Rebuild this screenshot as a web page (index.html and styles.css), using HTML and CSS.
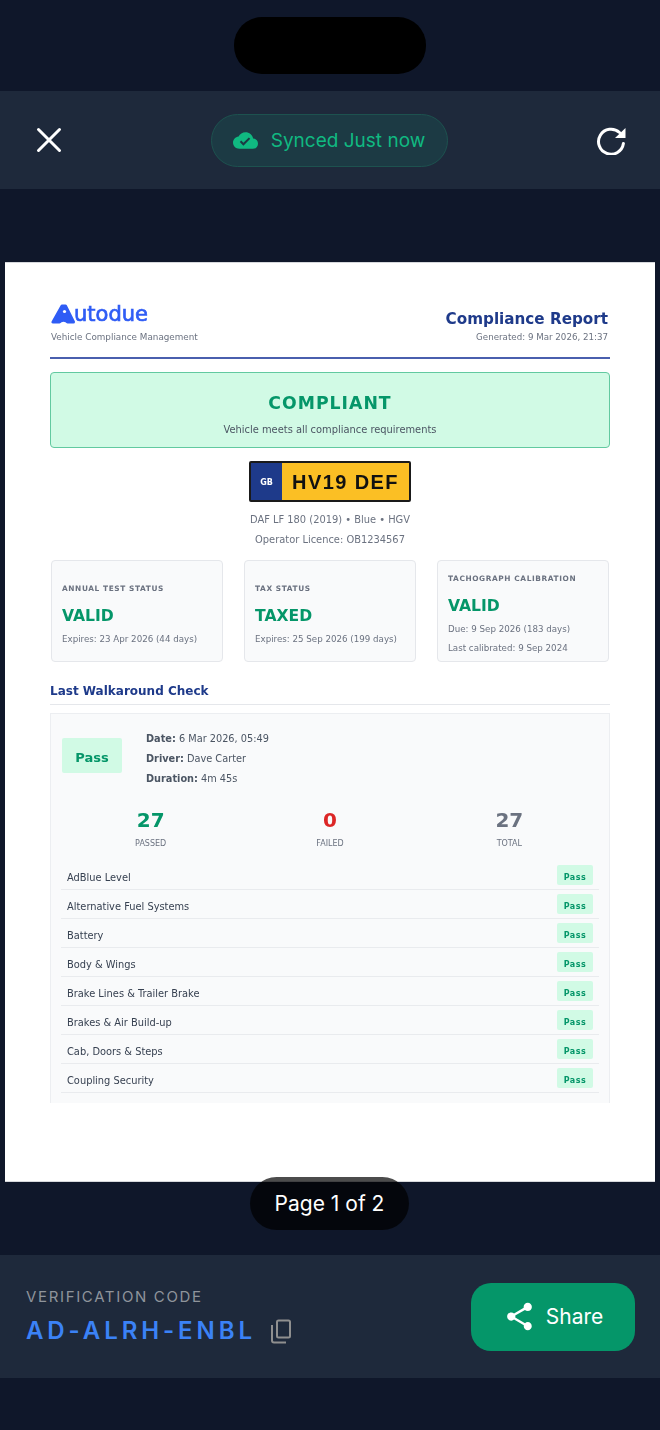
FILE: index.html
```html
<!DOCTYPE html>
<html lang="en">
<head>
    <meta charset="UTF-8">
    <meta name="viewport" content="width=device-width, initial-scale=1.0">
    <title>Compliance Report</title>
    <link rel="stylesheet" href="styles.css">
</head>
<body>
    <div class="status-area">
        <div class="notch"></div>
    </div>

    <header class="top-bar">
        <button class="icon-btn" aria-label="Close">
            <svg width="26" height="26" viewBox="0 0 26 26" fill="none" stroke="#fff" stroke-width="3" stroke-linecap="round"><path d="M2.5 2.5L23.5 23.5M23.5 2.5L2.5 23.5"/></svg>
        </button>
        <div class="sync-pill">
            <svg width="25" height="25" viewBox="0 0 24 24" fill="#10b981"><path fill-rule="evenodd" d="M19.35 10.04C18.67 6.59 15.64 4 12 4 9.11 4 6.6 5.64 5.35 8.04 2.34 8.36 0 10.91 0 14c0 3.31 2.69 6 6 6h13c2.76 0 5-2.24 5-5 0-2.64-2.05-4.78-4.65-4.96zM10 17l-3.5-3.5 1.41-1.41L10 14.17 15.18 9l1.41 1.41L10 17z"/></svg>
            <span>Synced Just now</span>
        </div>
        <button class="icon-btn" aria-label="Refresh">
            <svg width="30" height="30" viewBox="0 0 30 30" fill="none"><path d="M23.5 7.5A12.5 12.5 0 1 0 27.4 18.5" stroke="#fff" stroke-width="3" stroke-linecap="round"/><path d="M29.5 3V13H19Z" fill="#fff"/></svg>
        </button>
    </header>

    <main class="viewer">
        <div class="doc">
            <div class="doc-head">
                <div>
                    <div class="logo">
                        <svg width="25" height="21" viewBox="0 0 25 21">
                            <path fill="#2f5cf5" stroke="#2f5cf5" stroke-width="3" stroke-linejoin="round" d="M11 2L2 18H22.5L14.5 2Z"/>
                            <path fill="#fff" d="M8.5 20Q12.5 15.5 16.5 20Z"/>
                            <circle cx="13.5" cy="7.5" r="1.6" fill="#fff"/>
                        </svg>
                        <span>utodue</span>
                    </div>
                    <div class="tagline">Vehicle Compliance Management</div>
                </div>
                <div class="report-info">
                    <div class="report-title">Compliance Report</div>
                    <div class="generated">Generated: 9 Mar 2026, 21:37</div>
                </div>
            </div>

            <div class="banner">
                <div class="banner-title">COMPLIANT</div>
                <div class="banner-sub">Vehicle meets all compliance requirements</div>
            </div>

            <div class="plate">
                <div class="plate-gb">GB</div>
                <div class="plate-reg">HV19 DEF</div>
            </div>
            <div class="vehicle-info">
                <p>DAF LF 180 (2019) • Blue • HGV</p>
                <p>Operator Licence: OB1234567</p>
            </div>

            <div class="cards">
                <div class="card">
                    <div class="card-label">ANNUAL TEST STATUS</div>
                    <div class="card-value">VALID</div>
                    <div class="card-detail">Expires: 23 Apr 2026 (44 days)</div>
                </div>
                <div class="card">
                    <div class="card-label">TAX STATUS</div>
                    <div class="card-value">TAXED</div>
                    <div class="card-detail">Expires: 25 Sep 2026 (199 days)</div>
                </div>
                <div class="card">
                    <div class="card-label">TACHOGRAPH CALIBRATION</div>
                    <div class="card-value">VALID</div>
                    <div class="card-detail">Due: 9 Sep 2026 (183 days)</div>
                    <div class="card-detail">Last calibrated: 9 Sep 2024</div>
                </div>
            </div>

            <h2 class="section-title">Last Walkaround Check</h2>

            <div class="check-panel">
                <div class="check-head">
                    <div class="pass-big">Pass</div>
                    <div class="check-meta">
                        <p><strong>Date:</strong> 6 Mar 2026, 05:49</p>
                        <p><strong>Driver:</strong> Dave Carter</p>
                        <p><strong>Duration:</strong> 4m 45s</p>
                    </div>
                </div>
                <div class="stats">
                    <div class="stat"><div class="stat-num green">27</div><div class="stat-label">PASSED</div></div>
                    <div class="stat"><div class="stat-num red">0</div><div class="stat-label">FAILED</div></div>
                    <div class="stat"><div class="stat-num grey">27</div><div class="stat-label">TOTAL</div></div>
                </div>
                <div class="check-row"><span>AdBlue Level</span><span class="pass-small">Pass</span></div>
                <div class="check-row"><span>Alternative Fuel Systems</span><span class="pass-small">Pass</span></div>
                <div class="check-row"><span>Battery</span><span class="pass-small">Pass</span></div>
                <div class="check-row"><span>Body &amp; Wings</span><span class="pass-small">Pass</span></div>
                <div class="check-row"><span>Brake Lines &amp; Trailer Brake</span><span class="pass-small">Pass</span></div>
                <div class="check-row"><span>Brakes &amp; Air Build-up</span><span class="pass-small">Pass</span></div>
                <div class="check-row"><span>Cab, Doors &amp; Steps</span><span class="pass-small">Pass</span></div>
                <div class="check-row"><span>Coupling Security</span><span class="pass-small">Pass</span></div>
            </div>
        </div>
        <div class="page-pill">Page 1 of 2</div>
    </main>

    <footer class="bottom-bar">
        <div>
            <div class="code-label">VERIFICATION CODE</div>
            <div class="code-row">
                <span class="code">AD-ALRH-ENBL</span>
                <svg width="21" height="25" viewBox="0 0 21 25" fill="none" stroke="#8f8f8f" stroke-width="2"><rect x="7" y="1.5" width="13" height="17" rx="1.5"/><path d="M2 6V21.5A2 2 0 0 0 4 23.5H16"/></svg>
            </div>
        </div>
        <button class="share-btn">
            <svg width="33" height="33" viewBox="0 0 24 24" fill="#fff"><path d="M18 16.08c-.76 0-1.44.3-1.96.77L8.91 12.7c.05-.23.09-.46.09-.7s-.04-.47-.09-.7l7.05-4.11c.54.5 1.25.81 2.04.81 1.66 0 3-1.34 3-3s-1.34-3-3-3-3 1.34-3 3c0 .24.04.47.09.7L8.04 9.81C7.5 9.31 6.79 9 6 9c-1.66 0-3 1.34-3 3s1.34 3 3 3c.79 0 1.5-.31 2.04-.81l7.12 4.16c-.05.21-.08.43-.08.65 0 1.61 1.31 2.92 2.92 2.92 1.61 0 2.92-1.31 2.92-2.92s-1.31-2.92-2.92-2.92z"/></svg>
            <span>Share</span>
        </button>
    </footer>
</body>
</html>
```
FILE: styles.css
```css
/* App shell */
* {
    box-sizing: border-box;
}
body {
    font-family: Inter, sans-serif;
    background-color: #0f172a;
    color: #fff;
    margin: 0;
    height: 1430px;
    overflow: hidden;
}
p {
    margin: 0;
}
button {
    font-family: inherit;
    border: none;
    background: none;
    padding: 0;
}
.status-area {
    height: 91px;
    padding-top: 17px;
    display: flex;
    justify-content: center;
}
.notch {
    width: 192px;
    height: 57px;
    background-color: #000;
    border-radius: 28px;
}
.top-bar {
    height: 98px;
    background-color: #1e293b;
    display: flex;
    align-items: center;
    justify-content: space-between;
    padding: 0 34px 0 36px;
}
.icon-btn {
    display: flex;
}
.sync-pill {
    width: 237px;
    height: 53px;
    display: flex;
    align-items: center;
    justify-content: center;
    gap: 13px;
    background-color: #1c3a44;
    border: 1.5px solid #1d524f;
    border-radius: 27px;
    color: #10b981;
    font-size: 19px;
}

/* Document preview */
.viewer {
    position: relative;
    height: 1066px;
    padding: 73px 5px 0;
}
.doc {
    height: 920px;
    background-color: #fff;
    color: #374151;
    font-family: "DejaVu Sans", sans-serif;
    padding: 38px 45px 0;
    overflow: hidden;
    border: 1px solid #d6d8dc;
    border-width: 1px 0;
    filter: blur(0.35px);
}
.doc-head {
    display: flex;
    justify-content: space-between;
    align-items: flex-start;
    height: 58px;
    border-bottom: 2px solid #4a5fae;
}
.logo {
    display: flex;
    align-items: flex-end;
    height: 26px;
    margin-left: 1px;
    font-size: 21px;
    font-weight: 500;
    color: #2f5cf5;
    -webkit-text-stroke: 0.7px #2f5cf5;
}
.logo svg {
    margin-bottom: 2px;
}
.logo span {
    margin-left: -2px;
    line-height: 26px;
}
.tagline {
    margin: 5px 0 0 1px;
    font-size: 8.8px;
    color: #6b7280;
}
.report-info {
    text-align: right;
    padding: 9px 2px 0 0;
}
.report-title {
    font-size: 15.2px;
    font-weight: bold;
    color: #1e3a8a;
}
.generated {
    margin-top: 4px;
    font-size: 8.7px;
    color: #6b7280;
}
.banner {
    margin-top: 13px;
    height: 76px;
    background-color: #d1fae5;
    border: 1.5px solid #62c9a0;
    border-radius: 4px;
    text-align: center;
    padding-top: 18px;
}
.banner-title {
    font-size: 17.3px;
    line-height: 24px;
    font-weight: bold;
    letter-spacing: 1px;
    color: #059669;
}
.banner-sub {
    margin-top: 8px;
    font-size: 9.9px;
    line-height: 14px;
    color: #4b5563;
}
.plate {
    display: flex;
    width: 162px;
    height: 41px;
    margin: 13px auto 0;
    border: 2px solid #1a1a1a;
    border-radius: 2px;
}
.plate-gb {
    width: 31px;
    background-color: #1e3a8a;
    color: #fff;
    font-size: 8px;
    font-weight: bold;
    display: flex;
    align-items: center;
    justify-content: center;
    padding-top: 2px;
}
.plate-reg {
    flex: 1;
    background-color: #fbbf24;
    color: #111;
    font-family: "Liberation Sans", sans-serif;
    font-size: 20px;
    font-weight: bold;
    letter-spacing: 1.4px;
    display: flex;
    align-items: center;
    justify-content: center;
    padding-top: 2px;
}
.vehicle-info {
    margin-top: 8px;
    text-align: center;
    font-size: 9.9px;
    line-height: 20px;
    color: #6b7280;
}
.cards {
    display: grid;
    grid-template-columns: repeat(3, 172px);
    justify-content: space-between;
    margin: 10px 1px 0;
    height: 102px;
}
.card {
    background-color: #f9fafb;
    border: 1px solid #e5e7eb;
    border-radius: 4px;
    padding: 6px 10px 0;
    display: flex;
    flex-direction: column;
    justify-content: center;
}
.card-label {
    font-size: 7.4px;
    line-height: 10px;
    font-weight: bold;
    letter-spacing: 0.6px;
    color: #6b7280;
}
.card-value {
    margin-top: 12px;
    font-size: 15.6px;
    line-height: 20px;
    font-weight: bold;
    color: #059669;
}
.card-detail {
    margin-top: 7px;
    font-size: 8.7px;
    line-height: 12px;
    color: #6b7280;
}
.section-title {
    margin: 21px 0 0;
    height: 22px;
    font-size: 12px;
    line-height: 16px;
    color: #1e3a8a;
    border-bottom: 1px solid #e5e7eb;
}
.check-panel {
    margin-top: 8px;
    height: 390px;
    background-color: #f9fafb;
    border: 1px solid #eceef1;
    border-bottom: none;
    padding: 15px 10px 0;
    overflow: hidden;
}
.check-head {
    display: flex;
    align-items: flex-start;
    padding-left: 1px;
}
.pass-big {
    width: 60px;
    height: 35px;
    margin: 9px 24px 0 0;
    background-color: #d1fae5;
    border-radius: 2px;
    color: #059669;
    font-size: 13px;
    font-weight: bold;
    display: flex;
    align-items: center;
    justify-content: center;
    padding-top: 4px;
}
.check-meta {
    font-size: 9.75px;
    line-height: 20px;
    color: #4b5563;
}
.stats {
    display: grid;
    grid-template-columns: repeat(3, 1fr);
    margin-top: 17px;
    height: 55px;
    text-align: center;
}
.stat-num {
    font-size: 20px;
    line-height: 28px;
    font-weight: bold;
}
.green {
    color: #059669;
}
.red {
    color: #dc2626;
}
.grey {
    color: #6b7280;
}
.stat-label {
    margin-top: 5px;
    font-size: 8px;
    line-height: 10px;
    color: #6b7280;
}
.check-row {
    height: 29px;
    display: flex;
    align-items: flex-end;
    justify-content: space-between;
    padding: 0 6px 4px 6px;
    border-bottom: 1px solid #e9ebee;
    font-size: 9.85px;
    line-height: 14px;
    color: #374151;
}
.pass-small {
    width: 36px;
    height: 20px;
    background-color: #d1fae5;
    border-radius: 2px;
    color: #059669;
    font-size: 8px;
    font-weight: bold;
    letter-spacing: 0.5px;
    text-align: center;
    line-height: 25px;
}
.page-pill {
    position: absolute;
    top: 988px;
    left: 250px;
    width: 159px;
    height: 53px;
    background-color: rgba(0, 0, 0, 0.7);
    border-radius: 27px;
    color: #fff;
    font-size: 21px;
    display: flex;
    align-items: center;
    justify-content: center;
}

/* Bottom bar */
.bottom-bar {
    height: 123px;
    background-color: #1e293b;
    display: flex;
    align-items: center;
    justify-content: space-between;
    padding: 0 25px 0 26px;
}
.code-label {
    font-size: 15px;
    line-height: 20px;
    letter-spacing: 1.65px;
    color: #8f949b;
}
.code-row {
    display: flex;
    align-items: center;
    gap: 14px;
    margin-top: 9px;
}
.code {
    font-size: 24px;
    line-height: 30px;
    font-weight: 600;
    letter-spacing: 3.9px;
    color: #3b82f6;
}
.share-btn {
    width: 164px;
    height: 68px;
    background-color: #059669;
    border-radius: 20px;
    color: #fff;
    font-size: 21px;
    display: flex;
    align-items: center;
    justify-content: center;
    gap: 10px;
}
```
